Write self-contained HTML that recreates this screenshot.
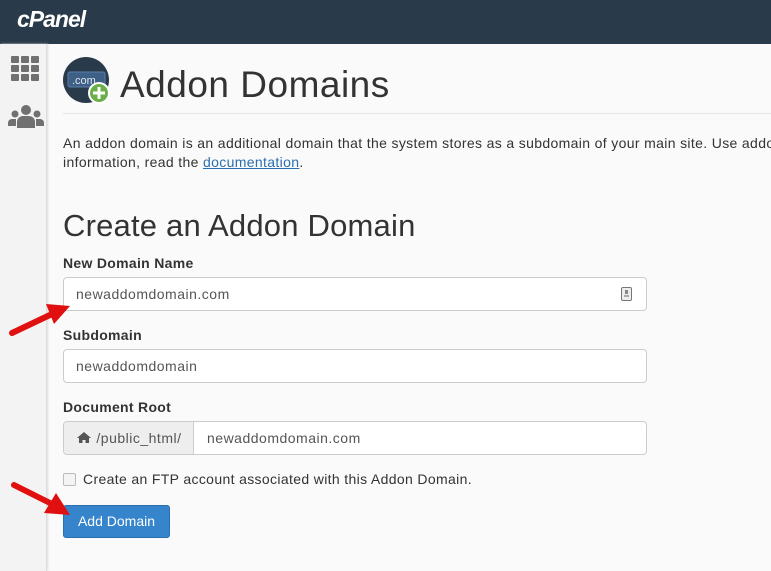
<!DOCTYPE html>
<html><head><style>
body{margin:0;width:771px;height:571px;overflow:hidden;background:#fafafa;font-family:"Liberation Sans",sans-serif;position:relative;color:#333}
.hdr{position:absolute;left:0;top:0;width:771px;height:44px;background:#293a4a}
.logo{position:absolute;left:17px;top:6px;color:#fff;font-weight:bold;font-style:italic;font-size:23px;letter-spacing:-1px}
.side{position:absolute;left:0;top:44px;width:46px;height:527px;background:#f3f3f3;border-right:1px solid #ddd;box-shadow:1px 0 2px #ddd}
.abs{position:absolute}
.inp{position:absolute;left:63px;width:584px;height:32px;border:1px solid #ccc;border-radius:4px;background:#fff;font-size:14px;color:#555;box-sizing:border-box;padding:8px 12px;letter-spacing:0.5px}
.lbl{position:absolute;left:63px;font-size:14px;font-weight:bold;color:#333;letter-spacing:0.3px}
</style></head><body>
<div class="hdr"><div class="logo">cPanel</div></div>
<div class="side">
<svg class="abs" style="left:11px;top:12px" width="29" height="25"><g fill="#707070"><rect x="0" y="0" width="8" height="7" rx="1"/><rect x="10" y="0" width="8" height="7" rx="1"/><rect x="20" y="0" width="8" height="7" rx="1"/><rect x="0" y="9" width="8" height="7" rx="1"/><rect x="10" y="9" width="8" height="7" rx="1"/><rect x="20" y="9" width="8" height="7" rx="1"/><rect x="0" y="18" width="8" height="7" rx="1"/><rect x="10" y="18" width="8" height="7" rx="1"/><rect x="20" y="18" width="8" height="7" rx="1"/></g></svg>
<svg class="abs" style="left:8px;top:60px" width="36" height="24"><g fill="#707070"><circle cx="18" cy="6" r="5"/><path d="M9 24v-6a6 6 0 0 1 6-6h6a6 6 0 0 1 6 6v6z"/><circle cx="7" cy="10" r="3.5"/><path d="M0 22v-3a4 4 0 0 1 4-4h4v7z"/><circle cx="29" cy="10" r="3.5"/><path d="M36 22v-3a4 4 0 0 0-4-4h-4v7z"/></g></svg>
</div>
<svg class="abs" style="left:63px;top:57px" width="48" height="48"><circle cx="23" cy="23" r="23" fill="#293a4a"/><rect x="5" y="15" width="37" height="15" rx="2" fill="#3e5f86" stroke="#5a7fa8"/><text x="9" y="27" font-size="11" font-family="Liberation Sans" fill="#dfe7ef">.com</text><circle cx="36" cy="36" r="11" fill="#fff"/><circle cx="36" cy="36" r="9" fill="#6aaf4a"/><rect x="34.5" y="30" width="3" height="12" fill="#fff"/><rect x="30" y="34.5" width="12" height="3" fill="#fff"/></svg>
<div class="abs" style="left:120px;top:64px;font-size:37px;color:#333;letter-spacing:0.5px">Addon Domains</div>
<div class="abs" style="left:63px;top:113px;width:708px;border-top:1px solid #e5e5e5"></div>
<div class="abs" style="left:63px;top:134px;font-size:14px;line-height:19px;white-space:nowrap;color:#333;letter-spacing:0.35px">An addon domain is an additional domain that the system stores as a subdomain of your main site. Use addon<br>information, read the <span style="color:#2a6fb0;text-decoration:underline">documentation</span>.</div>
<div class="abs" style="left:63px;top:208px;font-size:31px;color:#333;letter-spacing:0.2px">Create an Addon Domain</div>
<div class="lbl" style="top:255px">New Domain Name</div>
<div class="inp" style="top:277px;height:34px">newaddomdomain.com<svg class="abs" style="left:557px;top:9px" width="11" height="14"><rect x="0.5" y="0.5" width="10" height="13" rx="1.5" fill="#eee" stroke="#777"/><rect x="4" y="3" width="3" height="4" fill="#888"/><rect x="3" y="8" width="5" height="2" fill="#aaa"/></svg></div>
<div class="lbl" style="top:327px">Subdomain</div>
<div class="inp" style="top:349px;height:34px">newaddomdomain</div>
<div class="lbl" style="top:399px">Document Root</div>
<div class="inp" style="top:421px;height:34px;padding:0">
<div class="abs" style="left:0;top:0;width:130px;height:32px;background:#eee;border-right:1px solid #ccc;border-radius:4px 0 0 4px;font-size:14px;line-height:32px;padding-left:12px;box-sizing:border-box;color:#555"><svg width="16" height="13" style="vertical-align:-1px"><path d="M8 1 L1 7 L3 7 L3 12 L6.5 12 L6.5 9 L9.5 9 L9.5 12 L13 12 L13 7 L15 7 Z" fill="#555"/></svg> /public_html/</div>
<div class="abs" style="left:143px;top:8px">newaddomdomain.com</div></div>
<div class="abs" style="left:63px;top:473px;width:11px;height:11px;border:1px solid #bbb;border-radius:2px;background:#f4f4f4"></div>
<div class="abs" style="left:83px;top:471px;font-size:14px;color:#333;letter-spacing:0.35px">Create an FTP account associated with this Addon Domain.</div>
<div class="abs" style="left:63px;top:505px;width:107px;height:33px;background:#3584cc;border:1px solid #2a6fb0;border-radius:3px;box-sizing:border-box;color:#fff;font-size:14px;line-height:31px;text-align:center">Add Domain</div>
<svg class="abs" style="left:0;top:290px" width="80" height="50"><path d="M12 43 L52 24" stroke="#e01010" stroke-width="6" stroke-linecap="round"/><path d="M46 14 L70 16 L54 34 Z" fill="#e01010"/></svg>
<svg class="abs" style="left:0;top:475px" width="80" height="50"><path d="M14 10 L50 28" stroke="#e01010" stroke-width="6" stroke-linecap="round"/><path d="M44 38 L70 40 L56 18 Z" fill="#e01010"/></svg>
</body></html>
